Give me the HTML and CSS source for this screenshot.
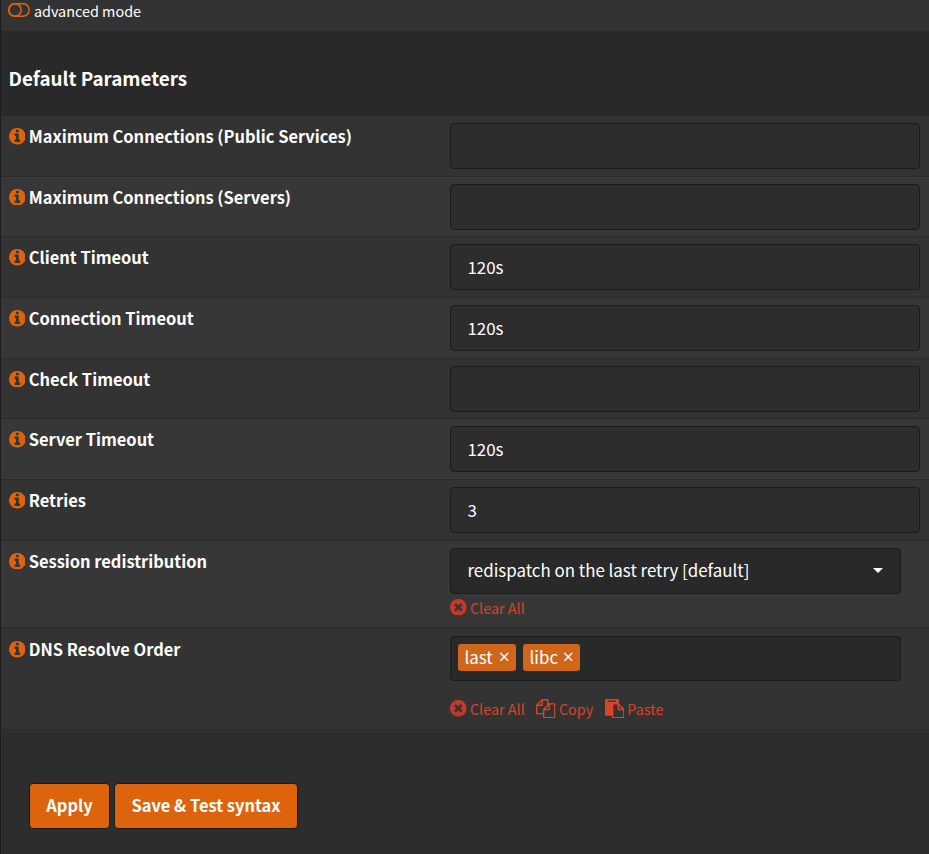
FILE: index.html
```html
<!DOCTYPE html>
<html lang="en">
<head>
<meta charset="utf-8">
<title>Default Parameters</title>
<link rel="stylesheet" href="styles.css">
</head>
<body>
<svg class="defs" aria-hidden="true">
  <symbol id="info" viewBox="128 128 1536 1536"><path d="M1152 1376v-160q0-14-9-23t-23-9h-96v-512q0-14-9-23t-23-9h-320q-14 0-23 9t-9 23v160q0 14 9 23t23 9h96v320h-96q-14 0-23 9t-9 23v160q0 14 9 23t23 9h448q14 0 23-9t9-23zm-128-896v-160q0-14-9-23t-23-9h-192q-14 0-23 9t-9 23v160q0 14 9 23t23 9h192q14 0 23-9t9-23zm640 416q0 209-103 385.500t-279.500 279.500-385.500 103-385.500-103-279.500-279.500-103-385.500 103-385.500 279.500-279.500 385.500-103 385.500 103 279.500 279.500 103 385.500z"/></symbol>
  <symbol id="clear" viewBox="128 128 1536 1536"><path d="M1277 1122q0-26-19-45l-181-181 181-181q19-19 19-45 0-27-19-46l-90-90q-19-19-46-19-26 0-45 19l-181 181-181-181q-19-19-45-19-27 0-46 19l-90 90q-19 19-19 46 0 26 19 45l181 181-181 181q-19 19-19 45 0 27 19 46l90 90q19 19 46 19 26 0 45-19l181-181 181 181q19 19 45 19 27 0 46-19l90-90q19-19 19-46zm387-226q0 209-103 385.500t-279.500 279.500-385.500 103-385.500-103-279.500-279.500-103-385.500 103-385.500 279.500-279.500 385.500-103 385.500 103 279.500 279.500 103 385.500z"/></symbol>
  <symbol id="copy" viewBox="0 0 1792 1792"><path d="M1696 384q40 0 68 28t28 68v1216q0 40-28 68t-68 28h-960q-40 0-68-28t-28-68v-288h-544q-40 0-68-28t-28-68v-672q0-40 20-88t48-76l408-408q28-28 76-48t88-20h416q40 0 68 28t28 68v328q68-40 128-40h416zm-544 213l-299 299h299v-299zm-640-384l-299 299h299v-299zm196 647l316-316v-416h-384v416q0 40-28 68t-68 28h-416v640h512v-256q0-40 20-88t48-76zm956 804v-1152h-384v416q0 40-28 68t-68 28h-416v640h896z"/></symbol>
  <symbol id="paste" viewBox="0 0 1792 1792"><path d="M768 1664h896v-640h-416q-40 0-68-28t-28-68v-416h-384v1152zm256-1440v-64q0-13-9.500-22.500t-22.500-9.500h-704q-13 0-22.500 9.500t-9.500 22.500v64q0 13 9.500 22.500t22.500 9.500h704q13 0 22.500-9.500t9.500-22.500zm256 672h299l-299-299v299zm512 128v672q0 40-28 68t-68 28h-960q-40 0-68-28t-28-68v-160h-544q-40 0-68-28t-28-68v-1344q0-40 28-68t68-28h1088q40 0 68 28t28 68v328q21 13 36 28l408 408q28 28 48 76t20 88z"/></symbol>
</svg>
<main class="panel">
  <div class="mode">
    <svg class="toggle" viewBox="0 0 22 14"><rect x=".8" y=".8" width="20.4" height="12.4" rx="6.200"/><circle cx="7" cy="7" r="6.200"/></svg>
    <span>advanced mode</span>
  </div>
  <h2 class="heading">Default Parameters</h2>
  <div class="row"><label class="label"><svg><use href="#info"/></svg><span>Maximum Connections (Public Services)</span></label><div class="field"></div></div>
  <div class="row"><label class="label"><svg><use href="#info"/></svg><span>Maximum Connections (Servers)</span></label><div class="field"></div></div>
  <div class="row"><label class="label"><svg><use href="#info"/></svg><span>Client Timeout</span></label><div class="field">120s</div></div>
  <div class="row"><label class="label"><svg><use href="#info"/></svg><span>Connection Timeout</span></label><div class="field">120s</div></div>
  <div class="row"><label class="label"><svg><use href="#info"/></svg><span>Check Timeout</span></label><div class="field"></div></div>
  <div class="row"><label class="label"><svg><use href="#info"/></svg><span>Server Timeout</span></label><div class="field">120s</div></div>
  <div class="row"><label class="label"><svg><use href="#info"/></svg><span>Retries</span></label><div class="field">3</div></div>
  <div class="row session">
    <label class="label"><svg><use href="#info"/></svg><span>Session redistribution</span></label>
    <div class="control">
      <div class="field select"><span>redispatch on the last retry [default]</span><svg class="caret" viewBox="0 0 10 5"><path d="M0 0h10L5 5z"/></svg></div>
      <div class="actions"><a class="clear"><svg class="round"><use href="#clear"/></svg>Clear All</a></div>
    </div>
  </div>
  <div class="row dns">
    <label class="label"><svg><use href="#info"/></svg><span>DNS Resolve Order</span></label>
    <div class="control">
      <div class="field tokens"><span class="token">last<b>×</b></span><span class="token">libc<b>×</b></span></div>
      <div class="actions"><a class="clear"><svg class="round"><use href="#clear"/></svg>Clear All</a><a class="copy"><svg><use href="#copy"/></svg>Copy</a><a class="paste"><svg><use href="#paste"/></svg>Paste</a></div>
    </div>
  </div>
  <div class="footer"><button class="apply">Apply</button><button class="test">Save &amp; Test syntax</button></div>
</main>
</body>
</html>
```
FILE: styles.css
```css
* { box-sizing: border-box; }
body {
  margin: 0;
  height: 854px;
  overflow: hidden;
  background: #2d2d2d;
  color: #fff;
  font: 16.900px/24px "Noto Sans CJK JP", "Open Sans", sans-serif;
}
.defs { display: none; }
.panel { height: 854px; border-left: 1px solid #1c1c1c; }
.mode {
  display: flex;
  gap: 3.500px;
  height: 31px;
  padding: 0 7.400px;
  background: #333;
  font-size: 14.4px;
  line-height: 22px;
}
.toggle { width: 22px; height: 14px; margin-top: 3px; fill: none; stroke: #dd640d; stroke-width: 1.5; }
.heading {
  height: 84px;
  margin: 0;
  padding: 35px 7.500px 0;
  background: #292929;
  font-size: 18.850px;
  font-weight: 600;
  line-height: 24px;
}
.row {
  display: grid;
  grid-template-columns: 441.500px 470px;
  height: 60.667px;
  padding: 7px 7.500px 0;
  border-top: 1px solid #2b2b2b;
  background: #333;
}
.row:nth-of-type(odd) { background: #373737; }
.label { display: flex; gap: 3.500px; height: 26px; font-size: 16.450px; font-weight: 600; line-height: 26px; }
.label svg { width: 16.700px; height: 16.700px; margin-top: 5px; fill: #dd640d; }
.field {
  display: flex;
  align-items: center;
  height: 46px;
  padding: 0 16.500px;
  border: 1px solid #1b1b1b;
  border-radius: 4px;
  background: #2d2d2d;
}
.session { height: 87.333px; }
.dns { height: 102px; padding-top: 8px; }
.select { width: 451px; padding-right: 17px; justify-content: space-between; background: #292929; }
.select span { line-height: 22px; padding-bottom: 2px; }
.caret { width: 10px; height: 5px; fill: #fff; }
.tokens { width: 451px; height: 45px; padding: 0 7px 2px; gap: 7px; background: #292929; }
.token {
  display: flex;
  align-items: center;
  justify-content: space-between;
  width: 58px;
  height: 27px;
  padding: 0 6px 1px 6.500px;
  border-radius: 3px;
  background: #d0661a;
}
.token + .token { width: 57px; }
.token b { font: 400 19.500px/24px "Open Sans", sans-serif; }
.actions { display: flex; gap: 11.500px; height: 24px; margin-top: 2px; color: #d9432b; font-size: 14.4px; }
.dns .actions { margin-top: 16px; }
.actions a { display: flex; align-items: center; gap: 3.200px; }
.actions svg { width: 19.500px; height: 19.500px; margin-top: -1px; fill: #dd432b; }
.actions .round { width: 16.700px; height: 16.700px; fill: #c9372b; }
.footer { display: flex; gap: 4px; padding: 54px 28px 0; }
.footer button {
  height: 46px;
  padding: 0 0 2px;
  border: 1px solid #1b1b1b;
  border-radius: 4px;
  background: #dd640d;
  color: #fff;
  font: 600 16.450px/24px "Noto Sans CJK JP", sans-serif;
}
.apply { width: 81px; }
.test { width: 184px; }
```
